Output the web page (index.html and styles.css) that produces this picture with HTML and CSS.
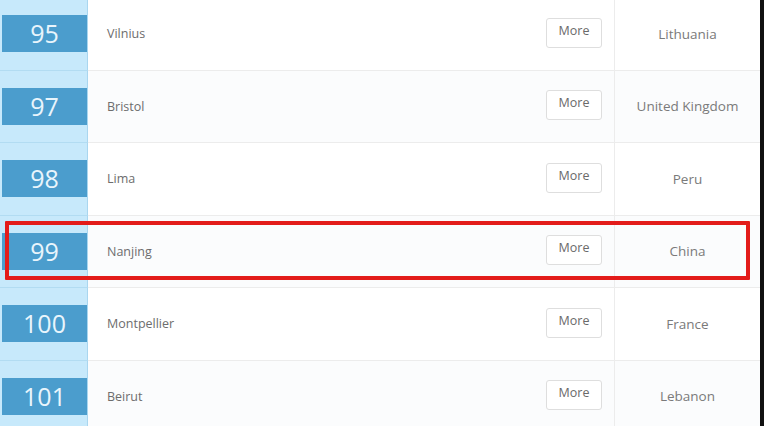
FILE: index.html
```html
<!DOCTYPE html>
<html lang="en">
<head>
  <meta charset="UTF-8" />
  <title>City Ranking</title>
  <link rel="stylesheet" href="styles.css">
</head>
<body>
  <div class="page">
    <div class="ranking">
      <div class="row">
        <div class="rank"><span class="badge">95</span></div>
        <div class="name">Vilnius</div>
        <div class="action"><button>More</button></div>
        <div class="country">Lithuania</div>
      </div>
      <div class="row">
        <div class="rank"><span class="badge">97</span></div>
        <div class="name">Bristol</div>
        <div class="action"><button>More</button></div>
        <div class="country">United Kingdom</div>
      </div>
      <div class="row">
        <div class="rank"><span class="badge">98</span></div>
        <div class="name">Lima</div>
        <div class="action"><button>More</button></div>
        <div class="country">Peru</div>
      </div>
      <div class="row marked">
        <div class="rank"><span class="badge">99</span></div>
        <div class="name">Nanjing</div>
        <div class="action"><button>More</button></div>
        <div class="country">China</div>
      </div>
      <div class="row">
        <div class="rank"><span class="badge">100</span></div>
        <div class="name">Montpellier</div>
        <div class="action"><button>More</button></div>
        <div class="country">France</div>
      </div>
      <div class="row">
        <div class="rank"><span class="badge">101</span></div>
        <div class="name">Beirut</div>
        <div class="action"><button>More</button></div>
        <div class="country">Lebanon</div>
      </div>
    </div>
    <div class="edge"></div>
  </div>
</body>
</html>
```

FILE: styles.css
```css
body {
  margin: 0;
  font-family: 'Open Sans', sans-serif;
  background-color: #ffffff;
  overflow: hidden;
}

.page {
  display: flex;
  height: 426px;
}

.ranking {
  width: 760px;
  margin-top: -2px;
}

.edge {
  width: 4px;
  background-color: #111;
}

.row {
  display: flex;
  height: 72.5px;
  border-bottom: 1px solid #ececec;
  box-sizing: border-box;
  position: relative;
}

.row:nth-child(even) {
  background-color: #fbfcfd;
}

/* red frame drawn over the highlighted row */
.row.marked::after {
  content: '';
  position: absolute;
  left: 5px;
  top: 5px;
  width: 737px;
  height: 51px;
  border: 4px solid #e31c1a;
  border-radius: 1px;
}

.rank {
  width: 88px;
  flex-shrink: 0;
  background-color: #c7e9fb;
  border-right: 1px solid #a9d6ef;
  border-bottom: 1px solid #b2dcf2;
  margin-bottom: -1px;
  display: flex;
  align-items: center;
  padding-left: 2px;
  box-sizing: border-box;
}

.badge {
  display: block;
  width: 85px;
  height: 37px;
  line-height: 37px;
  background-color: #4b9dcd;
  color: #e9f5fc;
  font-size: 25px;
  text-align: center;
}

.name {
  flex: 1;
  display: flex;
  align-items: center;
  padding-left: 19px;
  font-size: 12.5px;
  color: #6d6d6d;
}

.action {
  width: 68px;
  display: flex;
  align-items: center;
  padding-bottom: 2px;
  box-sizing: border-box;
}

.action button {
  width: 56px;
  height: 30px;
  background-color: #fff;
  border: 1px solid #dedede;
  border-radius: 3px;
  font-family: 'Open Sans', sans-serif;
  font-size: 12.5px;
  color: #6a6a6a;
  padding: 0 0 5px;
}

.country {
  width: 145px;
  border-left: 1px solid #ececec;
  display: flex;
  align-items: center;
  justify-content: center;
  font-size: 13.5px;
  color: #7a7a7a;
}
```
